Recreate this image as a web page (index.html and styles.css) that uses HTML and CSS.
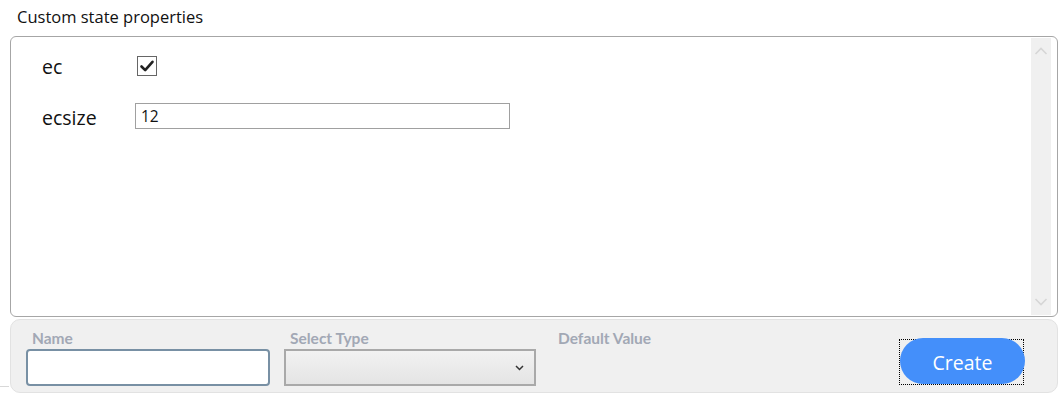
FILE: index.html
```html
<!DOCTYPE html>
<html>
<head>
<meta charset="utf-8">
<link rel="stylesheet" href="styles.css">
</head>
<body>
<div class="title">Custom state properties</div>
<div class="props">
  <div class="props-body">
    <div class="row">
      <span class="prop-label">ec</span>
      <span class="check">
        <svg width="16" height="16" viewBox="0 0 16 16"><path d="M2.5 8.5 L6.2 12.2 L13.5 3.8" fill="none" stroke="#222" stroke-width="2.6" stroke-linecap="round" stroke-linejoin="round"/></svg>
      </span>
    </div>
    <div class="row row2">
      <span class="prop-label lower">ecsize</span>
      <input class="prop-input" type="text" value="12">
    </div>
  </div>
  <div class="scrollbar">
    <span class="sb-btn">
      <svg width="14" height="8" viewBox="0 0 14 8"><path d="M1.5 7 L7 1.5 L12.5 7" fill="none" stroke="#d6d6d6" stroke-width="1.6"/></svg>
    </span>
    <span class="sb-track"></span>
    <span class="sb-btn">
      <svg width="14" height="8" viewBox="0 0 14 8"><path d="M1.5 1 L7 6.5 L12.5 1" fill="none" stroke="#d6d6d6" stroke-width="1.6"/></svg>
    </span>
  </div>
</div>
<div class="form">
  <div class="field f-name">
    <label class="f-label">Name</label>
    <div class="name-input"></div>
  </div>
  <div class="field f-type">
    <label class="f-label">Select Type</label>
    <div class="select">
      <svg width="9" height="6" viewBox="0 0 9 6"><path d="M1 1 L4.5 4.5 L8 1" fill="none" stroke="#333" stroke-width="1.5"/></svg>
    </div>
  </div>
  <div class="field f-default">
    <label class="f-label">Default Value</label>
  </div>
  <div class="f-action">
    <div class="focus-ring"><button class="create">Create</button></div>
  </div>
</div>
<div class="edge-line"></div>
</body>
</html>
```
FILE: styles.css
```css
html, body {
  margin: 0;
  padding: 0;
  background: #ffffff;
  width: 1059px;
  height: 416px;
  overflow: hidden;
  font-family: "Open Sans", "Noto Sans", "DejaVu Sans", sans-serif;
  color: #111;
}
.title {
  height: 36px;
  box-sizing: border-box;
  padding: 7px 0 0 17px;
  font-size: 16.5px;
  line-height: 20px;
}
.props {
  margin: 0 1px 0 10px;
  height: 281px;
  box-sizing: border-box;
  border: 1px solid #a6a6a6;
  border-radius: 6px;
  background: #fff;
  display: flex;
}
.props-body {
  flex: 1;
  padding: 18px 0 0 31px;
}
.row {
  display: flex;
  align-items: center;
  height: 24px;
}
.row2 {
  margin-top: 24px;
  height: 26px;
}
.prop-label {
  width: 93px;
  font-size: 19.5px;
  line-height: 24px;
  color: #111;
}
.lower {
  padding-top: 4px;
}
.check {
  width: 20px;
  height: 20px;
  box-sizing: border-box;
  border: 1px solid #666;
  background: #fff;
  display: flex;
  align-items: center;
  justify-content: center;
  margin-left: 2px;
  margin-top: -2px;
}
.prop-input {
  width: 375px;
  height: 26px;
  box-sizing: border-box;
  border: 1px solid #a0a0a0;
  padding: 0 5px;
  margin: 0;
  font-family: "Open Sans", "Noto Sans", sans-serif;
  font-size: 15.5px;
  color: #111;
  outline: none;
}
.scrollbar {
  width: 20px;
  margin: 1px 6px 1px 0;
  background: #f0f0f0;
  display: flex;
  flex-direction: column;
}
.sb-btn {
  height: 26px;
  display: flex;
  align-items: center;
  justify-content: center;
}
.sb-track {
  flex: 1;
}
.form {
  margin: 2px 1px 0 10px;
  height: 74px;
  box-sizing: border-box;
  border: 1px solid #e2e2e2;
  border-radius: 10px;
  background: #f0f0f0;
  display: flex;
  padding: 9px 0 0 15px;
}
.field {
  display: flex;
  flex-direction: column;
}
.f-label {
  font-family: "Lato", "Open Sans", sans-serif;
  font-weight: 700;
  font-size: 15.5px;
  line-height: 18px;
  color: #a2a8b5;
  padding-left: 6px;
  height: 20px;
}
.f-name { width: 258px; }
.f-type { width: 268px; }
.f-default { width: 300px; }
.name-input {
  width: 244px;
  height: 37px;
  box-sizing: border-box;
  border: 2px solid #7890a4;
  border-radius: 4px;
  background: #fff;
}
.select {
  width: 252px;
  height: 37px;
  box-sizing: border-box;
  border: 2px solid #a9a9a9;
  background: linear-gradient(#f2f2f2, #e4e4e4);
  display: flex;
  align-items: center;
  justify-content: flex-end;
  padding-right: 10px;
}
.f-action {
  margin-left: 47px;
  padding-top: 10px;
}
.focus-ring {
  width: 125px;
  height: 46px;
  box-sizing: border-box;
  border: 1px dotted #000;
  position: relative;
}
.create {
  position: absolute;
  left: 0;
  top: -2px;
  width: 125px;
  height: 46px;
  border: none;
  border-radius: 23px;
  background: #448ffa;
  color: #fff;
  font-family: "Open Sans", "Noto Sans", sans-serif;
  font-size: 19.5px;
  padding: 3px 0 0 0;
  margin: 0;
}
.edge-line {
  position: absolute;
  left: 0;
  top: 386px;
  width: 9px;
  height: 1px;
  background: #d8d8d8;
}
```
